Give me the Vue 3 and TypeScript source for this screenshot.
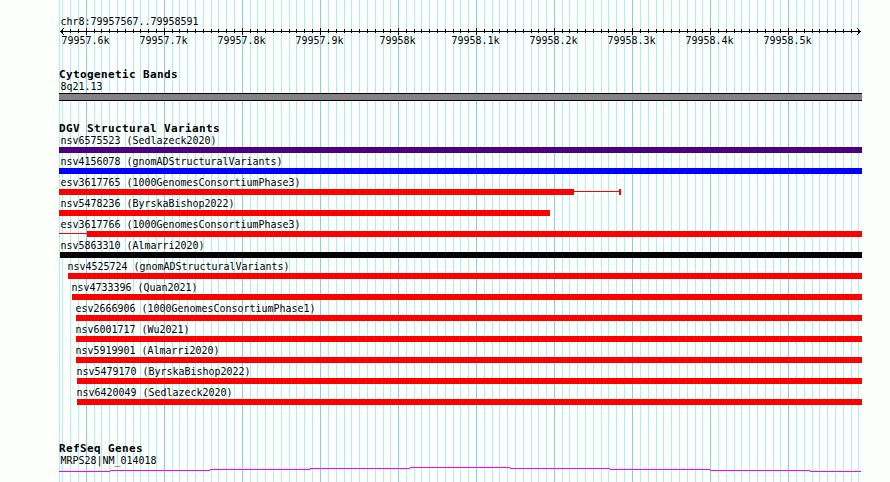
<script setup lang="ts">
interface Variant {
  id: string
  source: string
  start: number
  end: number
  color: string
  thin?: { from: number; to: number }
  cap?: number
}

const LEFT = 59
const RIGHT = 862

const majors = [86, 164, 242, 320, 398, 476, 554, 632, 710, 788]
const ticks = [
  62, 70, 78, 86, 94, 101, 109, 117, 125, 133, 140, 148, 156, 164, 172, 179, 187, 195, 203, 211,
  218, 226, 234, 242, 250, 257, 265, 273, 281, 289, 296, 304, 312, 320, 328, 336, 344, 351, 359,
  367, 375, 383, 390, 398, 406, 414, 421, 429, 437, 445, 453, 460, 468, 476, 484, 492, 499, 507,
  515, 523, 531, 538, 546, 554, 562, 569, 577, 585, 593, 601, 608, 616, 624, 632, 640, 648, 656,
  663, 671, 679, 687, 695, 702, 710, 718, 726, 734, 741, 749, 757, 765, 773, 780, 788, 796, 804,
  812, 819, 827, 835, 843, 851, 858,
]
const minors = ticks.filter((x) => !majors.includes(x))
const gridLines = [LEFT, ...minors]

const scaleLabels = majors.map((x, i) => {
  const text = `${(799576 + i) / 10}k`
  return { x, text }
})

const red = '#ff0000'
const variants: Variant[] = [
  { id: 'nsv6575523', source: 'Sedlazeck2020', start: 59, end: RIGHT, color: '#4b0082' },
  { id: 'nsv4156078', source: 'gnomADStructuralVariants', start: 59, end: RIGHT, color: '#0000ff' },
  { id: 'esv3617765', source: '1000GenomesConsortiumPhase3', start: 59, end: 574, color: red, thin: { from: 574, to: 619 }, cap: 619 },
  { id: 'nsv5478236', source: 'ByrskaBishop2022', start: 59, end: 550, color: red },
  { id: 'esv3617766', source: '1000GenomesConsortiumPhase3', start: 87, end: RIGHT, color: red, thin: { from: 59, to: 87 } },
  { id: 'nsv5863310', source: 'Almarri2020', start: 60, end: RIGHT, color: '#000000' },
  { id: 'nsv4525724', source: 'gnomADStructuralVariants', start: 68, end: RIGHT, color: red },
  { id: 'nsv4733396', source: 'Quan2021', start: 72, end: RIGHT, color: red },
  { id: 'esv2666906', source: '1000GenomesConsortiumPhase1', start: 76, end: RIGHT, color: red },
  { id: 'nsv6001717', source: 'Wu2021', start: 76, end: RIGHT, color: red },
  { id: 'nsv5919901', source: 'Almarri2020', start: 76, end: RIGHT, color: red },
  { id: 'nsv5479170', source: 'ByrskaBishop2022', start: 77, end: RIGHT, color: red },
  { id: 'nsv6420049', source: 'Sedlazeck2020', start: 77, end: RIGHT, color: red },
]

function labelIndent(v: Variant): string {
  const first = v.thin ? Math.min(v.start, v.thin.from) : v.start
  return `${Math.max(first - 1, 60) - LEFT}px`
}

const intron = [
  { x: 59, w: 51, y: 4 },
  { x: 110, w: 100, y: 3 },
  { x: 210, w: 100, y: 2 },
  { x: 310, w: 100, y: 1 },
  { x: 410, w: 100, y: 0 },
  { x: 510, w: 100, y: 1 },
  { x: 610, w: 100, y: 2 },
  { x: 710, w: 100, y: 3 },
  { x: 810, w: 51, y: 4 },
]
</script>

<template>
  <main class="browser">
    <svg class="grid" width="890" height="482" shape-rendering="crispEdges" aria-hidden="true">
      <rect v-for="x in gridLines" :key="x" class="minor" :x="x" y="0" width="1" height="482" />
      <rect v-for="x in majors" :key="x" class="major" :x="x" y="0" width="1" height="482" />
    </svg>

    <section class="overview">
      <p class="label">chr8:79957567..79958591</p>
      <svg class="ruler" width="803" height="7" viewBox="59 28 803 7" shape-rendering="crispEdges">
        <rect x="60" y="31" width="801" height="1" />
        <rect v-for="x in minors" :key="x" :x="x" y="29" width="1" height="4" />
        <rect v-for="x in majors" :key="x" :x="x" y="28" width="1" height="7" />
        <path d="M61 30h1v1h-1zM62 29h1v1h-1zM63 28h1v1h-1zM61 32h1v1h-1zM62 33h1v1h-1zM63 34h1v1h-1z" />
        <path d="M859 30h1v1h-1zM858 29h1v1h-1zM857 28h1v1h-1zM859 32h1v1h-1zM858 33h1v1h-1zM857 34h1v1h-1z" />
      </svg>
      <div class="scale">
        <span v-for="s in scaleLabels" :key="s.x" class="tick"><span class="label">{{ s.text }}</span></span>
      </div>
    </section>

    <section class="bands">
      <h2>Cytogenetic Bands</h2>
      <p class="label">8q21.13</p>
      <div class="band"></div>
    </section>

    <section class="variants">
      <h2>DGV Structural Variants</h2>
      <div v-for="v in variants" :key="v.id" class="row">
        <p class="label" :style="{ marginLeft: labelIndent(v) }">{{ v.id }} ({{ v.source }})</p>
        <svg class="glyph" width="803" height="6" viewBox="59 0 803 6" shape-rendering="crispEdges" :fill="v.color">
          <rect :x="v.start" y="0" :width="v.end - v.start" height="6" />
          <rect v-if="v.thin" :x="v.thin.from" y="2" :width="v.thin.to - v.thin.from" height="1" />
          <rect v-if="v.cap" :x="v.cap" y="0" width="2" height="6" />
        </svg>
      </div>
    </section>

    <section class="genes">
      <h2>RefSeq Genes</h2>
      <p class="label">MRPS28|NM_014018</p>
      <svg class="gene" width="803" height="5" viewBox="59 0 803 5" shape-rendering="crispEdges">
        <rect v-for="s in intron" :key="s.x" :x="s.x" :y="s.y" :width="s.w" height="1" />
      </svg>
    </section>
  </main>
</template>

<style>
body {
  margin: 0;
  background: #fdfffd;
}
</style>

<style scoped>
.browser {
  position: relative;
  box-sizing: border-box;
  width: 890px;
  height: 482px;
  padding: 15px 28px 0 59px;
  overflow: hidden;
  background: #fdfffd;
  color: #000;
  font-family: 'DejaVu Sans Mono', 'Liberation Mono', monospace;
}
.grid {
  position: absolute;
  inset: 0;
}
.minor {
  fill: #afeeee;
}
.major {
  fill: #87ceeb;
}
section {
  position: relative;
}
svg {
  display: block;
}
.label {
  margin: 0 0 0 1px;
  height: 12px;
  font-size: 10px;
  line-height: 12px;
  letter-spacing: -0.02px;
  white-space: pre;
  transform: translate(0.5px, 1px) scaleY(1.1);
  transform-origin: 0 10px;
}
h2 {
  margin: 0;
  height: 12px;
  font-size: 11px;
  font-weight: 700;
  line-height: 12px;
  letter-spacing: 0.378px;
  white-space: pre;
  transform: translateY(1px);
}
.overview {
  height: 53px;
}
.ruler {
  margin-top: 1px;
}
.scale {
  display: grid;
  grid-template-columns: repeat(10, 78px);
  margin: -1px 0 0 -13px;
}
.tick {
  display: flex;
  justify-content: center;
}
.tick .label {
  margin: 0;
}
.bands {
  height: 54px;
}
.band {
  box-sizing: border-box;
  width: 803px;
  height: 8px;
  margin-top: 1px;
  border: solid #000;
  border-width: 1px 0;
  background: #848284;
}
.variants {
  height: 320px;
}
.row {
  height: 21px;
}
.glyph {
  margin-top: 1px;
}
.gene {
  margin-top: 1px;
  fill: #ff00ff;
}
</style>
